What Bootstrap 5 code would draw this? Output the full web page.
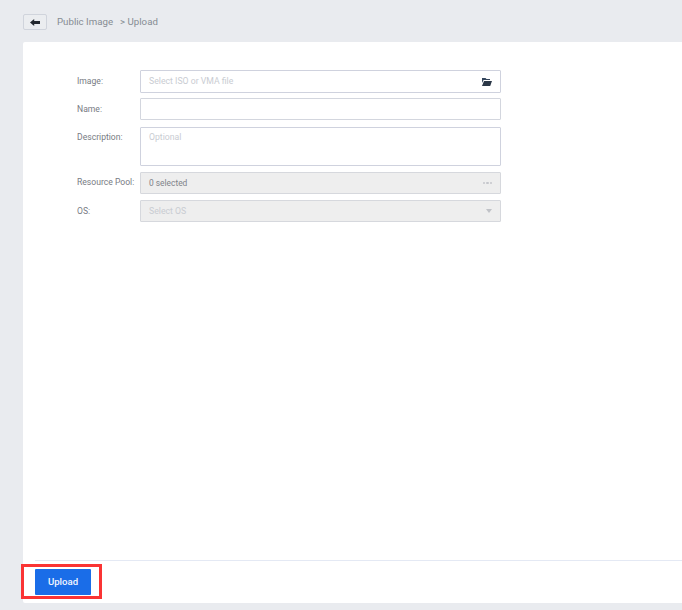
<!DOCTYPE html>
<html lang="en">
<head>
<meta charset="utf-8">
<title>Upload</title>
<link rel="stylesheet" href="https://cdn.jsdelivr.net/npm/bootstrap@5.3.0/dist/css/bootstrap.min.css">
<style>
html, body { height: 100%; }
body { background: #e9ebef; font-family: Roboto, "Liberation Sans", sans-serif; font-size: 9px; color: #6b7280; overflow: hidden; }
.page-wrap { height: 610px; padding: 14px 0 7px 23px; }
.top-bar { height: 28px; }
.back-btn { width: 24px; height: 16px; padding: 0; background: #ebedf0; border: 1px solid #d0d4dc; border-radius: 2px; }
.crumb { font-size: 9.7px; color: #868b93; margin-left: 10px; padding-top: 1px; }
.crumb-sep { margin-left: 7px; }
.panel-box { height: 561px; background: #fff; border-radius: 2px 0 0 2px; }
.form-area { padding: 28px 0 0 54px; }
.field-row { margin-bottom: 6px; }
.gap-five { margin-bottom: 5px; }
.gap-seven { margin-bottom: 7px; }
.field-label { width: 63px; flex: none; color: #777b83; font-size: 8.6px; padding-top: 6px; white-space: nowrap; line-height: 11px; }
.label-high { padding-top: 5px; }
.field-box { width: 361px; height: 23px; border: 1px solid #cfd2de; border-radius: 1px; padding: 0 8px; font-size: 8.7px; color: #c9ccd2; background: #fff; }
.box-name { height: 22px; border-color: #d3d6de; }
.box-desc { height: 39px; padding-top: 3px; align-items: flex-start !important; }
.box-off { height: 22px; background: #eee; border-color: #d6d8dd; }
.hint-low { padding-top: 1px; }
.text-val { color: #7f838a; font-size: 8.4px; }
.dots-mark { display: flex; gap: 1px; }
.dots-mark i { width: 2.5px; height: 2.5px; border-radius: 50%; background: #c4c6cb; }
.panel-foot { border-top: 1px solid #e4e9f4; margin-left: 12px; padding: 8px 0; }
.btn-send { width: 56px; height: 26px; padding: 0; background: #1a6de8; border: 0; border-radius: 1px; color: #f3f6ff; font-size: 9.6px; font-weight: 500; }
.btn-send:hover { background: #1a6de8; color: #fff; }
.foot-slot { position: relative; }
.mark-frame { position: absolute; left: -14px; top: -5px; width: 81px; height: 35px; border: 3px solid #fa3434; pointer-events: none; }
</style>
</head>
<body>
<div class="page-wrap">
  <div class="top-bar d-flex align-items-start">
    <button class="back-btn btn d-flex align-items-center justify-content-center" type="button" aria-label="Back">
      <svg width="10" height="7" viewBox="0 0 10 7"><path d="M0 3.5 4.2 0v2H10v3H4.2v2z" fill="#23282f"/></svg>
    </button>
    <div class="crumb d-flex"><span>Public Image</span><span class="crumb-sep">&gt; Upload</span></div>
  </div>
  <div class="panel-box d-flex flex-column">
    <div class="form-area flex-grow-1">
      <div class="field-row gap-five d-flex">
        <div class="field-label">Image:</div>
        <div class="field-box d-flex align-items-center justify-content-between"><span class="hint-low">Select ISO or VMA file</span>
          <svg class="me-n1" width="10" height="8" viewBox="0 0 10 8"><path d="M0 0h3.5l1 1H8v1H1.6L0 5z" fill="#34465c"/><path d="M2 3h8L8.2 8H0z" fill="#2b3747"/></svg>
        </div>
      </div>
      <div class="field-row gap-seven d-flex">
        <div class="field-label">Name:</div>
        <div class="field-box box-name"></div>
      </div>
      <div class="field-row d-flex">
        <div class="field-label label-high">Description:</div>
        <div class="field-box box-desc d-flex">Optional</div>
      </div>
      <div class="field-row d-flex">
        <div class="field-label label-high">Resource Pool:</div>
        <div class="field-box box-off d-flex align-items-center justify-content-between"><span class="text-val">0 selected</span><span class="dots-mark me-n1"><i></i><i></i><i></i></span></div>
      </div>
      <div class="field-row d-flex">
        <div class="field-label">OS:</div>
        <div class="field-box box-off d-flex align-items-center justify-content-between"><span class="hint-low">Select OS</span>
          <svg width="6" height="4" viewBox="0 0 6 4"><path d="M0 0h6L3 4z" fill="#c0c2c7"/></svg>
        </div>
      </div>
    </div>
    <div class="panel-foot">
      <div class="foot-slot d-inline-block">
        <button class="btn-send btn d-block" type="button">Upload</button>
        <div class="mark-frame"></div>
      </div>
    </div>
  </div>
</div>
<script src="https://cdn.jsdelivr.net/npm/bootstrap@5.3.0/dist/js/bootstrap.bundle.min.js"></script>
</body>
</html>
